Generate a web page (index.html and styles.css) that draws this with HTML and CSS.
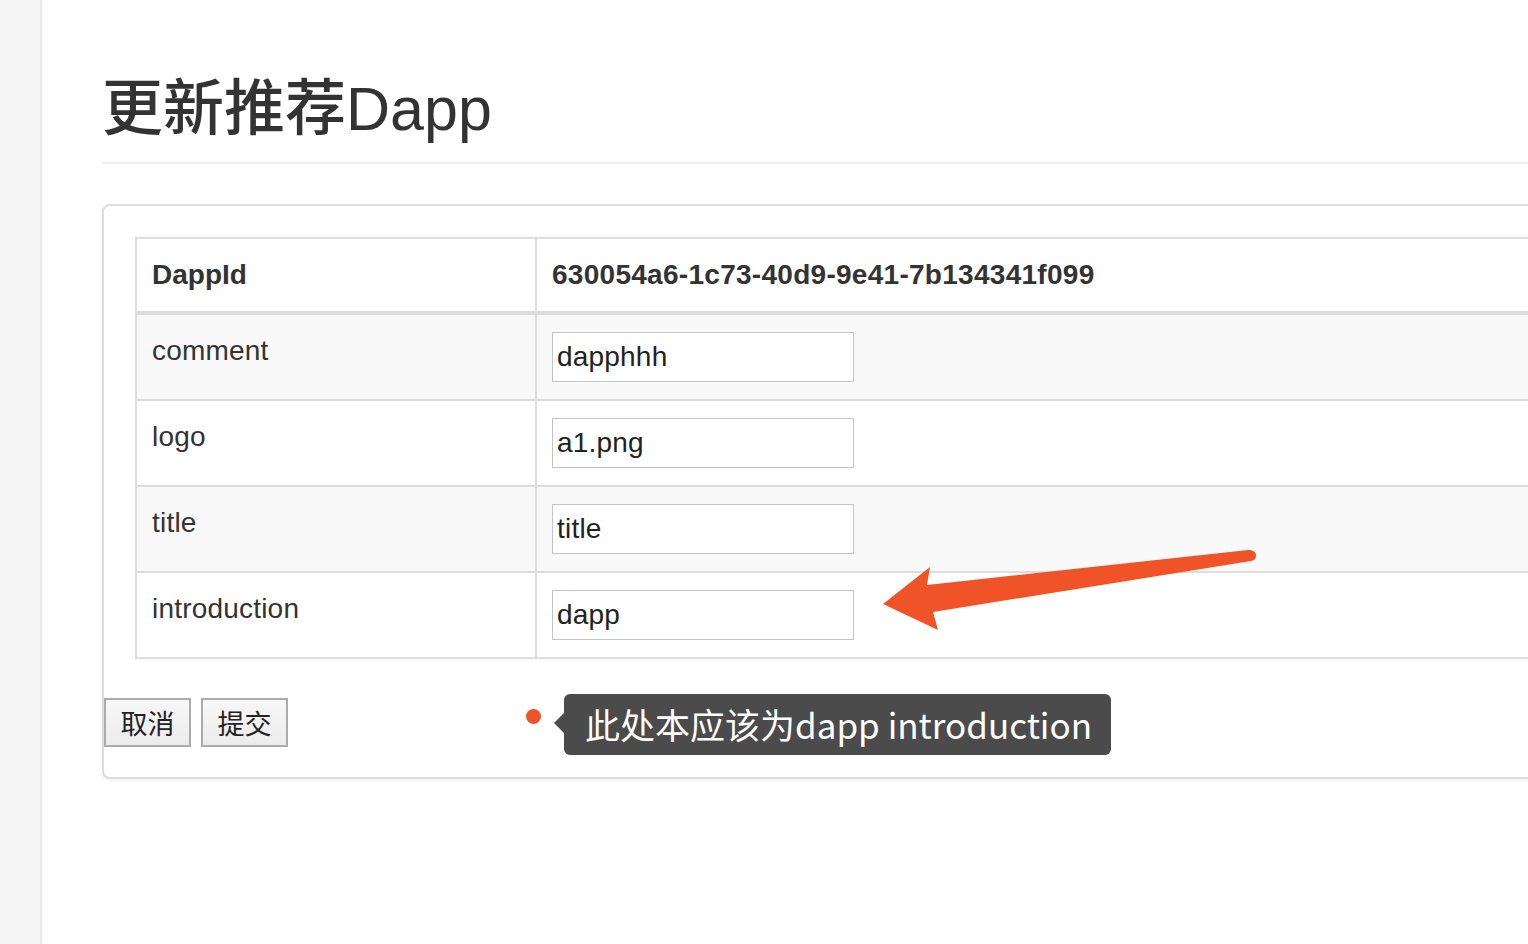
FILE: index.html
```html
<!DOCTYPE html>
<html lang="zh-CN">
<head>
<meta charset="utf-8">
<title>更新推荐Dapp</title>
<link rel="stylesheet" href="styles.css">
</head>
<body>
<div class="layout">
  <aside class="sidebar"></aside>
  <main class="main">
    <div class="page-header">
      <h1 class="title">更新推荐Dapp</h1>
    </div>
    <section class="panel">
      <div class="panel-body">
        <table class="detail-table">
          <colgroup>
            <col class="col-key">
            <col>
          </colgroup>
          <thead>
            <tr>
              <th>DappId</th>
              <th class="id-value">630054a6-1c73-40d9-9e41-7b134341f099</th>
            </tr>
          </thead>
          <tbody>
            <tr class="odd">
              <td>comment</td>
              <td><input class="field" type="text" value="dapphhh"></td>
            </tr>
            <tr>
              <td>logo</td>
              <td><input class="field" type="text" value="a1.png"></td>
            </tr>
            <tr class="odd">
              <td>title</td>
              <td><input class="field" type="text" value="title"></td>
            </tr>
            <tr>
              <td>introduction</td>
              <td><input class="field" type="text" value="dapp"></td>
            </tr>
          </tbody>
        </table>
      </div>
      <div class="actions">
        <button class="btn" type="button">取消</button>
        <button class="btn" type="button">提交</button>
      </div>
    </section>
  </main>
</div>

<div class="annotation">
  <span class="note-dot"></span>
  <div class="note-bubble">此处本应该为dapp introduction</div>
</div>

<svg class="arrow" width="1528" height="944" viewBox="0 0 1528 944" xmlns="http://www.w3.org/2000/svg">
  <path d="M883 604 L930 567 L927 585 L1248 550 Q1256 550 1256 555.5 Q1256 560 1251 561 L933 612 L938 630 Z" fill="#f15328"/>
</svg>
</body>
</html>
```

FILE: styles.css
```css
html, body {
  margin: 0;
  padding: 0;
  background: #ffffff;
  overflow: hidden;
}

body {
  font-family: "Liberation Sans", Arial, "Noto Sans CJK SC", sans-serif;
  color: #333333;
  width: 1528px;
  height: 944px;
  position: relative;
}

.layout {
  display: flex;
  height: 944px;
}

.sidebar {
  flex: 0 0 40px;
  background: #f5f5f5;
  border-right: 2px solid #e7e7e7;
}

.main {
  flex: 0 0 1700px;
  padding-left: 60px;
}

.page-header {
  padding-top: 76px;
  padding-bottom: 19px;
  border-bottom: 2px solid #eeeeee;
  margin-bottom: 40px;
}

.title {
  margin: 0;
  font-size: 61px;
  line-height: 67px;
  font-weight: 500;
  color: #333333;
  font-family: "Liberation Sans", Arial, "Noto Sans CJK SC", sans-serif;
}

.panel {
  border: 2px solid #dddddd;
  border-radius: 8px;
  box-shadow: 0 2px 3px rgba(0, 0, 0, 0.06);
  background: #ffffff;
  padding-bottom: 30px;
}

.panel-body {
  padding: 31px 31px 39px 31px;
}

.detail-table {
  width: 100%;
  border-collapse: collapse;
  border: 2px solid #dddddd;
  font-size: 28px;
  line-height: 40px;
}

.col-key {
  width: 400px;
}

.detail-table th,
.detail-table td {
  border: 2px solid #dddddd;
  padding: 16px 15px;
  text-align: left;
  vertical-align: top;
}

.detail-table td {
  letter-spacing: 0.2px;
}

.detail-table th {
  font-weight: bold;
  border-bottom-width: 4px;
}

.detail-table th.id-value {
  letter-spacing: 0.28px;
}

.detail-table tr.odd td {
  background: #f9f9f9;
}

.field {
  display: block;
  box-sizing: border-box;
  width: 302px;
  height: 50px;
  margin: 1px 0;
  padding: 0 4px;
  border: 1px solid #c4c4c4;
  background: #ffffff;
  font-family: "Liberation Sans", Arial, sans-serif;
  font-size: 28px;
  letter-spacing: 0.2px;
  color: #222222;
  outline: none;
}

.actions {
  display: flex;
  gap: 10px;
}

.btn {
  box-sizing: border-box;
  width: 87px;
  height: 49px;
  padding: 0;
  border: 2px solid #ababab;
  background: linear-gradient(#f7f7f7, #ececec);
  font-family: "Noto Sans CJK SC", sans-serif;
  font-size: 27px;
  color: #222222;
}

.annotation {
  position: absolute;
  left: 526px;
  top: 694px;
  display: flex;
  align-items: center;
}

.note-dot {
  position: absolute;
  left: 0;
  top: 15px;
  width: 15px;
  height: 15px;
  border-radius: 50%;
  background: #f15328;
}

.note-bubble {
  position: relative;
  margin-left: 38px;
  height: 61px;
  box-sizing: border-box;
  padding: 0 19px 0 21px;
  background: #4b4b4b;
  border-radius: 6px;
  color: #ffffff;
  font-family: "Noto Sans CJK SC", sans-serif;
  font-size: 35px;
  line-height: 59px;
  white-space: nowrap;
}

.note-bubble::before {
  content: "";
  position: absolute;
  left: -10px;
  top: 19px;
  border-top: 10px solid transparent;
  border-bottom: 10px solid transparent;
  border-right: 10px solid #4b4b4b;
}

.arrow {
  position: absolute;
  left: 0;
  top: 0;
  pointer-events: none;
}
```
